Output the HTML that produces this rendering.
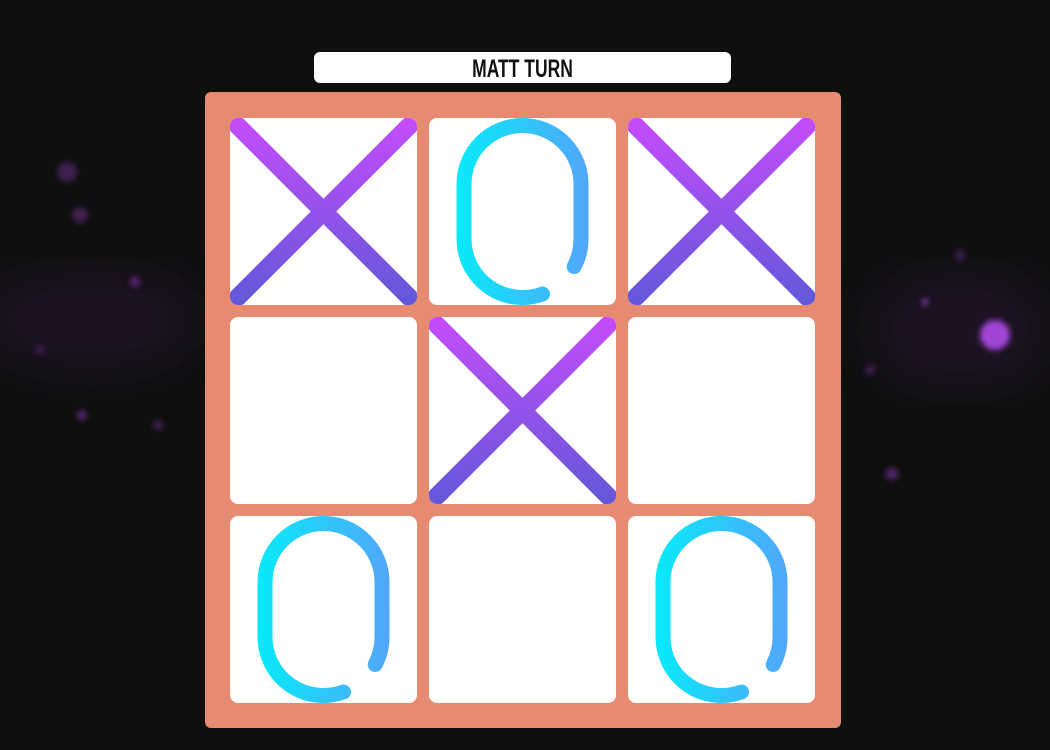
<!DOCTYPE html>
<html><head><meta charset="utf-8"><style>
html,body{margin:0;padding:0;width:1050px;height:750px;overflow:hidden;background:#0e100e;}
svg{display:block}
</style></head><body>
<svg width="1050" height="750" viewBox="0 0 1050 750" xmlns="http://www.w3.org/2000/svg">
<defs>
<linearGradient id="gx" gradientUnits="userSpaceOnUse" x1="0" y1="0" x2="0" y2="187">
<stop offset="0" stop-color="#c54cfb"/><stop offset="1" stop-color="#6258d9"/></linearGradient>
<linearGradient id="go" gradientUnits="userSpaceOnUse" x1="27" y1="0" x2="160" y2="0">
<stop offset="0" stop-color="#08eafa"/><stop offset="1" stop-color="#52a6fb"/></linearGradient>
<clipPath id="cc"><rect x="0" y="0" width="187" height="187" rx="8"/></clipPath>
<filter id="bl"><feGaussianBlur stdDeviation="3"/></filter>
<filter id="bl2"><feGaussianBlur stdDeviation="25"/></filter>
<g id="X"><g clip-path="url(#cc)" stroke="url(#gx)" stroke-width="18" stroke-linecap="round">
<line x1="8" y1="8" x2="179" y2="179"/><line x1="179" y1="8" x2="8" y2="179"/></g></g>
<g id="O"><path d="M145.2 148.5 A58.5 58.5 0 0 0 152 121 L152 66 A58.5 58.5 0 0 0 35 66 L35 121 A58.5 58.5 0 0 0 113.5 176" fill="none" stroke="url(#go)" stroke-width="15" stroke-linecap="round"/></g>
</defs>
<g opacity="0.35" filter="url(#bl2)" fill="#3a1650">
<ellipse cx="90" cy="320" rx="110" ry="50"/>
<ellipse cx="960" cy="330" rx="90" ry="60"/>
</g>
<g filter="url(#bl)" fill="#8a34b8">
<circle cx="995" cy="335" r="15" fill="#a244d6"/>
<circle cx="925" cy="302" r="3" fill="#a244d6"/>
<circle cx="67" cy="172" r="10" opacity="0.4"/>
<circle cx="80" cy="215" r="8" opacity="0.4"/>
<circle cx="135" cy="282" r="5" opacity="0.6"/>
<circle cx="82" cy="415" r="5" opacity="0.6"/>
<circle cx="892" cy="474" r="6" opacity="0.6"/>
<circle cx="960" cy="255" r="5" opacity="0.4"/>
<circle cx="158" cy="425" r="5" opacity="0.4"/>
<circle cx="40" cy="350" r="4" opacity="0.4"/>
<circle cx="870" cy="370" r="5" opacity="0.4"/>
</g>
<rect x="314" y="52" width="417" height="31" rx="6" fill="#fff"/>
<text x="522.5" y="77" text-anchor="middle" font-family="'Liberation Sans Narrow','Liberation Sans',sans-serif" font-weight="bold" font-size="25" transform="translate(522.5 0) scale(0.7 1) translate(-522.5 0)" fill="#111">MATT TURN</text>
<rect x="205" y="92" width="636" height="636" rx="6" fill="#e78a72"/>
<g fill="#fff">
<rect x="230" y="118" width="187" height="187" rx="8"/>
<rect x="429" y="118" width="187" height="187" rx="8"/>
<rect x="628" y="118" width="187" height="187" rx="8"/>
<rect x="230" y="317" width="187" height="187" rx="8"/>
<rect x="429" y="317" width="187" height="187" rx="8"/>
<rect x="628" y="317" width="187" height="187" rx="8"/>
<rect x="230" y="516" width="187" height="187" rx="8"/>
<rect x="429" y="516" width="187" height="187" rx="8"/>
<rect x="628" y="516" width="187" height="187" rx="8"/>
</g>
<use href="#X" transform="translate(230 118)"/>
<use href="#O" transform="translate(429 118)"/>
<use href="#X" transform="translate(628 118)"/>
<use href="#X" transform="translate(429 317)"/>
<use href="#O" transform="translate(230 516)"/>
<use href="#O" transform="translate(628 516)"/>
</svg>
</body></html>
